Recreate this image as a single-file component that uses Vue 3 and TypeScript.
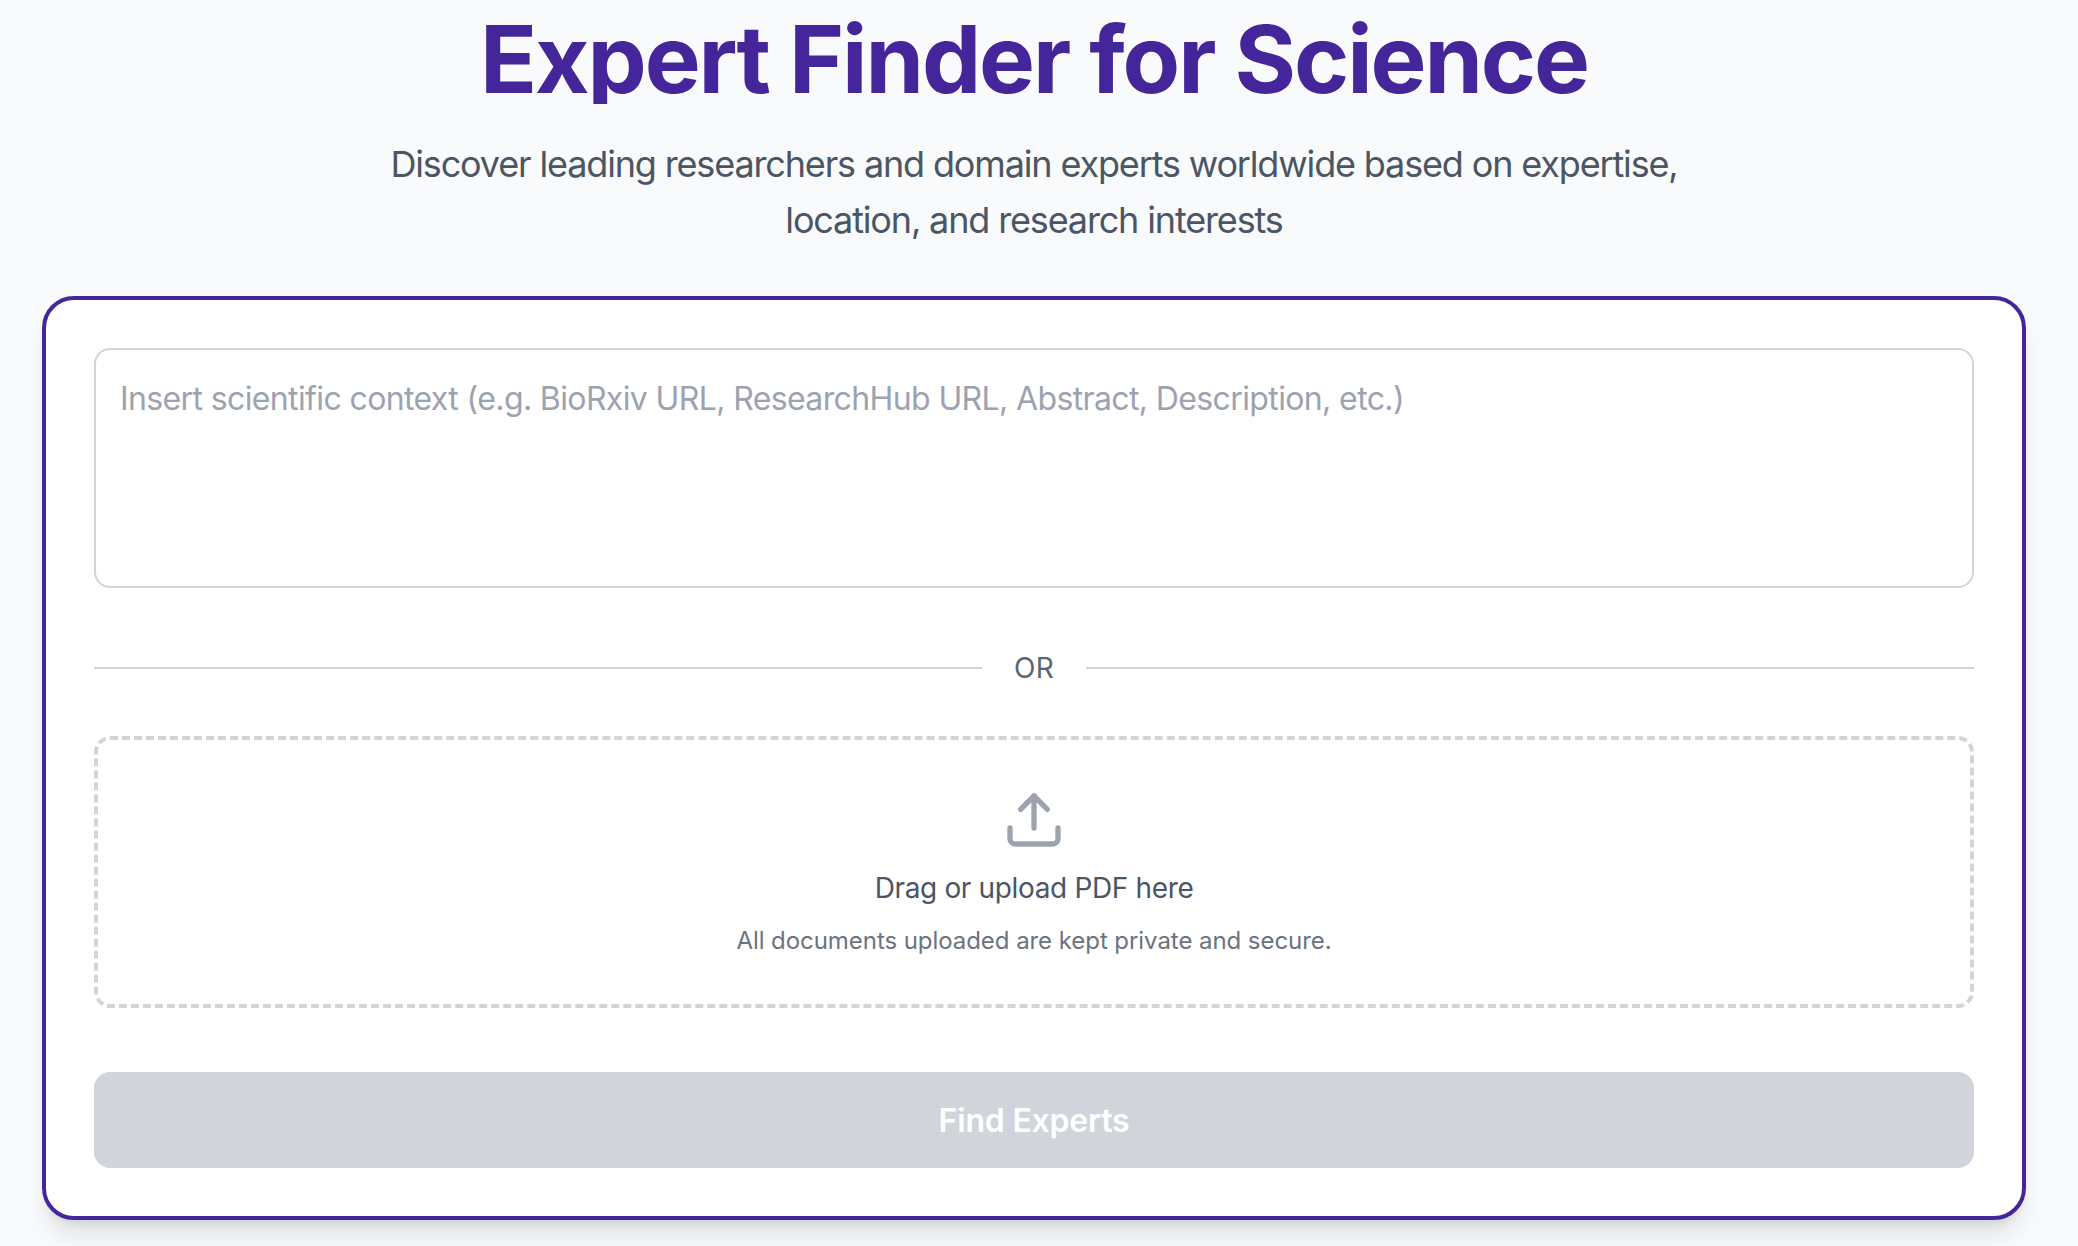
<script setup lang="ts">
const placeholder = 'Insert scientific context (e.g. BioRxiv URL, ResearchHub URL, Abstract, Description, etc.)'
</script>

<template>
  <main class="page">
    <header class="head">
      <h1 class="title">Expert Finder for Science</h1>
      <p class="sub">Discover leading researchers and domain experts worldwide based on expertise, location, and research interests</p>
    </header>
    <section class="card">
      <textarea class="context" :placeholder="placeholder"></textarea>
      <div class="divider"><span class="line"></span><span class="or">OR</span><span class="line"></span></div>
      <div class="drop">
        <svg class="icon" viewBox="0 0 24 24" fill="none" stroke="currentColor" stroke-width="2" stroke-linecap="round" stroke-linejoin="round">
          <path d="M21 15v4a2 2 0 0 1-2 2H5a2 2 0 0 1-2-2v-4" />
          <path d="m17 8-5-5-5 5" />
          <path d="M12 3v12" />
        </svg>
        <p class="drop-main">Drag or upload PDF here</p>
        <p class="drop-note">All documents uploaded are kept private and secure.</p>
      </div>
      <button class="find" disabled>Find Experts</button>
    </section>
  </main>
</template>

<style scoped>
.page {
  box-sizing: border-box;
  min-height: 1246px;
  padding: 0 52px 26px 42px;
  background: #f9fafb;
  font-family: Inter, "Liberation Sans", sans-serif;
  display: flex;
  flex-direction: column;
}
.head {
  text-align: center;
  height: 296px;
  padding-top: 11px;
  box-sizing: border-box;
}
.title {
  margin: 0;
  height: 93px;
  overflow: hidden;
  font-size: 94px;
  line-height: 96px;
  font-weight: 700;
  letter-spacing: -2.1px;
  color: #44269a;
}
.sub {
  margin: 32px auto 0;
  width: 1344px;
  font-size: 36px;
  line-height: 56px;
  letter-spacing: -1.15px;
  color: #4b5563;
}
.card {
  box-sizing: border-box;
  height: 924px;
  border: 4px solid #44269a;
  border-radius: 32px;
  background: #fff;
  padding: 48px;
  box-shadow: 0 20px 25px -5px rgba(0, 0, 0, 0.1), 0 8px 10px -6px rgba(0, 0, 0, 0.1);
  display: flex;
  flex-direction: column;
}
.context {
  box-sizing: border-box;
  display: block;
  width: 100%;
  height: 240px;
  border: 2px solid #d1d5db;
  border-radius: 16px;
  padding: 25px 24px 23px;
  margin: 0;
  resize: none;
  outline: none;
  font-family: inherit;
  font-size: 32px;
  line-height: 48px;
  letter-spacing: -0.62px;
  background: #fff;
  color: #111827;
}
.context::placeholder {
  color: #9ca3af;
  opacity: 1;
}
.divider {
  display: flex;
  align-items: center;
  margin: 64px 0 52px;
  height: 32px;
}
.line {
  flex: 1;
  height: 2px;
  background: #d1d5db;
}
.or {
  padding: 0 32px;
  font-size: 28px;
  line-height: 32px;
  font-weight: 400;
  letter-spacing: 0.4px;
  color: #5b6472;
}
.drop {
  box-sizing: border-box;
  height: 272px;
  border: 4px dashed #d1d5db;
  border-radius: 16px;
  display: flex;
  flex-direction: column;
  align-items: center;
  padding-top: 48px;
}
.icon {
  width: 64px;
  height: 64px;
  color: #9ca3af;
}
.drop-main {
  margin: 16px 0 0;
  font-size: 28px;
  line-height: 40px;
  font-weight: 400;
  letter-spacing: -0.35px;
  color: #4b5563;
}
.drop-note {
  margin: 17px 0 0;
  font-size: 24px;
  line-height: 32px;
  letter-spacing: -0.06px;
  color: #6b7280;
}
.find {
  margin-top: 64px;
  height: 96px;
  border: 0;
  border-radius: 16px;
  background: #d1d5db;
  color: #fff;
  font-family: inherit;
  font-size: 32px;
  font-weight: 600;
  letter-spacing: -0.2px;
}
</style>

<style>
html, body { margin: 0; background: #f9fafb; }
</style>
